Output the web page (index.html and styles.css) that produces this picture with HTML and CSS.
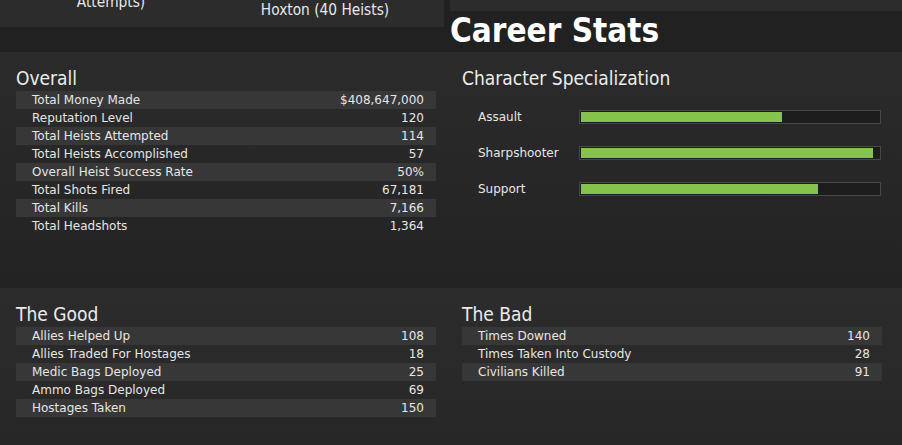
FILE: index.html
```html
<!DOCTYPE html>
<html>
<head>
<meta charset="utf-8">
<link rel="stylesheet" href="styles.css">
</head>
<body>
<header class="top">
  <div class="prev-panel">
    <div class="prev-cell prev-a"><span>Attempts)</span></div>
    <div class="prev-cell prev-b"><span>Hoxton (40 Heists)</span></div>
  </div>
  <div class="title-col">
    <div class="prev-strip"></div>
    <h1 class="title">Career Stats</h1>
  </div>
</header>

<section class="band band-one">
  <div class="col">
    <h2 class="heading">Overall</h2>
    <div class="table">
      <div class="row"><span>Total Money Made</span><span>$408,647,000</span></div>
      <div class="row"><span>Reputation Level</span><span>120</span></div>
      <div class="row"><span>Total Heists Attempted</span><span>114</span></div>
      <div class="row"><span>Total Heists Accomplished</span><span>57</span></div>
      <div class="row"><span>Overall Heist Success Rate</span><span>50%</span></div>
      <div class="row"><span>Total Shots Fired</span><span>67,181</span></div>
      <div class="row"><span>Total Kills</span><span>7,166</span></div>
      <div class="row"><span>Total Headshots</span><span>1,364</span></div>
    </div>
  </div>
  <div class="col">
    <h2 class="heading">Character Specialization</h2>
    <div class="bars">
      <div class="bar-row"><span class="bar-label">Assault</span><div class="track"><div class="fill" style="width:67.4%"></div></div></div>
      <div class="bar-row"><span class="bar-label">Sharpshooter</span><div class="track"><div class="fill" style="width:98%"></div></div></div>
      <div class="bar-row"><span class="bar-label">Support</span><div class="track"><div class="fill" style="width:79.5%"></div></div></div>
    </div>
  </div>
</section>

<section class="band band-two">
  <div class="col">
    <h2 class="heading">The Good</h2>
    <div class="table">
      <div class="row"><span>Allies Helped Up</span><span>108</span></div>
      <div class="row"><span>Allies Traded For Hostages</span><span>18</span></div>
      <div class="row"><span>Medic Bags Deployed</span><span>25</span></div>
      <div class="row"><span>Ammo Bags Deployed</span><span>69</span></div>
      <div class="row"><span>Hostages Taken</span><span>150</span></div>
    </div>
  </div>
  <div class="col">
    <h2 class="heading">The Bad</h2>
    <div class="table">
      <div class="row"><span>Times Downed</span><span>140</span></div>
      <div class="row"><span>Times Taken Into Custody</span><span>28</span></div>
      <div class="row"><span>Civilians Killed</span><span>91</span></div>
    </div>
  </div>
</section>
</body>
</html>
```

FILE: styles.css
```css
html, body {
  margin: 0;
  padding: 0;
}
body {
  background: #212121;
  color: #e6e6e6;
  font-family: "DejaVu Sans Condensed", "DejaVu Sans", sans-serif;
  font-stretch: condensed;
  overflow: hidden;
}
.top {
  display: flex;
  height: 52px;
}
.prev-panel {
  width: 444px;
  height: 27px;
  background: #2c2c2c;
  display: flex;
  overflow: hidden;
  font-size: 15.3px;
  line-height: 17px;
  color: #e8e8e8;
}
.prev-cell {
  text-align: center;
  white-space: nowrap;
}
.prev-a {
  width: 222px;
}
.prev-a span {
  display: block;
  margin-top: -6px;
}
.prev-b {
  width: 206px;
}
.prev-b span {
  display: block;
  margin-top: 2px;
}
.title-col {
  margin-left: 6px;
  flex: 1;
}
.prev-strip {
  height: 11px;
  background: #2c2c2c;
}
.title {
  margin: 0;
  font-size: 33px;
  line-height: 39px;
  font-weight: bold;
  color: #ffffff;
  padding-bottom: 2px;
}
.band {
  display: grid;
  grid-template-columns: 420px 420px;
  column-gap: 26px;
  padding: 15px 0 0 16px;
  box-sizing: border-box;
}
.band-one {
  height: 236px;
  background: linear-gradient(#2b2b2b, #232323);
}
.band-two {
  height: 157px;
  background: linear-gradient(#2c2c2c, #272727);
}
.heading {
  margin: 0 0 2px 0;
  font-size: 19px;
  line-height: 22px;
  font-weight: normal;
  color: #ececec;
}
.table {
  display: flex;
  flex-direction: column;
}
.row {
  display: flex;
  justify-content: space-between;
  height: 18px;
  line-height: 18px;
  font-family: "DejaVu Sans", sans-serif;
  font-stretch: normal;
  font-size: 12px;
  padding: 0 12px 0 16px;
}
.row:nth-child(odd) {
  background: #373737;
}
.bars {
  display: flex;
  flex-direction: column;
  gap: 18px;
  margin-top: 19px;
  padding-left: 16px;
}
.bar-row {
  display: flex;
  align-items: center;
  height: 18px;
  font-family: "DejaVu Sans", sans-serif;
  font-stretch: normal;
  font-size: 12px;
}
.bar-label {
  width: 101px;
  flex: none;
}
.track {
  width: 302px;
  height: 14px;
  box-sizing: border-box;
  border: 1px solid #474747;
  padding: 1px;
  background: #1d1d1d;
}
.fill {
  height: 10px;
  background: #85c34b;
}
```
